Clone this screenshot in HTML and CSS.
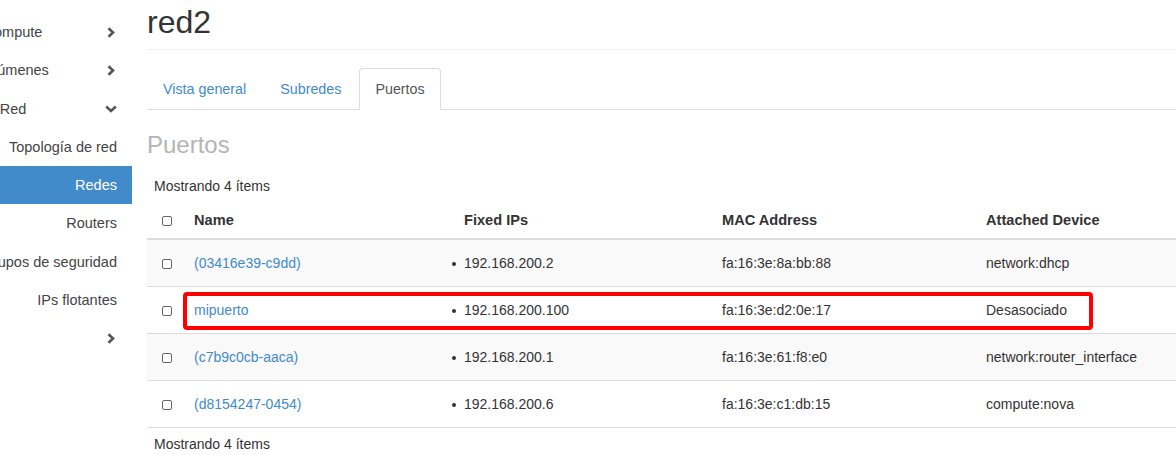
FILE: index.html
```html
<!DOCTYPE html>
<html lang="es">
<head>
<meta charset="utf-8">
<title>red2 - Puertos</title>
<link rel="stylesheet" href="styles.css">
</head>
<body>
<div class="page">
  <nav class="sidebar">
    <div class="group"><span class="label">Compute</span><span class="chev"><svg width="8" height="11" viewBox="0 0 8 11"><path d="M1.5 1.2 L6 5.5 L1.5 9.8" fill="none" stroke="#555" stroke-width="2.6"/></svg></span></div>
    <div class="group"><span class="label">Volúmenes</span><span class="chev"><svg width="8" height="11" viewBox="0 0 8 11"><path d="M1.5 1.2 L6 5.5 L1.5 9.8" fill="none" stroke="#555" stroke-width="2.6"/></svg></span></div>
    <div class="group"><span class="label">Red</span><span class="chev"><svg width="12" height="8" viewBox="0 0 12 8"><path d="M1.2 1.5 L6 6 L10.8 1.5" fill="none" stroke="#555" stroke-width="2.6"/></svg></span></div>
    <a class="sub"><span>Topología de red</span></a>
    <a class="sub active"><span>Redes</span></a>
    <a class="sub"><span>Routers</span></a>
    <a class="sub"><span>Grupos de seguridad</span></a>
    <a class="sub"><span>IPs flotantes</span></a>
    <div class="group"><span class="label"></span><span class="chev"><svg width="8" height="11" viewBox="0 0 8 11"><path d="M1.5 1.2 L6 5.5 L1.5 9.8" fill="none" stroke="#555" stroke-width="2.6"/></svg></span></div>
  </nav>

  <main class="main">
    <h1 class="page-title">red2</h1>
    <ul class="tabs">
      <li><a>Vista general</a></li>
      <li><a>Subredes</a></li>
      <li class="active"><a>Puertos</a></li>
    </ul>

    <h2 class="section-title">Puertos</h2>
    <div class="count">Mostrando 4 ítems</div>
    <table class="ports">
      <colgroup>
        <col class="c-check"><col class="c-name"><col class="c-ips"><col class="c-mac"><col class="c-dev">
      </colgroup>
      <thead>
        <tr>
          <th class="check"><input type="checkbox" class="cb"></th>
          <th>Name</th>
          <th>Fixed IPs</th>
          <th>MAC Address</th>
          <th>Attached Device</th>
        </tr>
      </thead>
      <tbody>
        <tr>
          <td class="check"><input type="checkbox" class="cb"></td>
          <td><a class="link">(03416e39-c9dd)</a></td>
          <td><ul class="ips"><li>192.168.200.2</li></ul></td>
          <td>fa:16:3e:8a:bb:88</td>
          <td>network:dhcp</td>
        </tr>
        <tr>
          <td class="check"><input type="checkbox" class="cb"></td>
          <td class="marked"><a class="link">mipuerto</a><span class="highlight"></span></td>
          <td><ul class="ips"><li>192.168.200.100</li></ul></td>
          <td>fa:16:3e:d2:0e:17</td>
          <td>Desasociado</td>
        </tr>
        <tr>
          <td class="check"><input type="checkbox" class="cb"></td>
          <td><a class="link">(c7b9c0cb-aaca)</a></td>
          <td><ul class="ips"><li>192.168.200.1</li></ul></td>
          <td>fa:16:3e:61:f8:e0</td>
          <td>network:router_interface</td>
        </tr>
        <tr>
          <td class="check"><input type="checkbox" class="cb"></td>
          <td><a class="link">(d8154247-0454)</a></td>
          <td><ul class="ips"><li>192.168.200.6</li></ul></td>
          <td>fa:16:3e:c1:db:15</td>
          <td>compute:nova</td>
        </tr>
      </tbody>
    </table>
    <div class="count foot">Mostrando 4 ítems</div>
  </main>
</div>
</body>
</html>
```

FILE: styles.css
```css
html, body {
  margin: 0;
  padding: 0;
  background: #fff;
  overflow: hidden;
}
body {
  font-family: "Liberation Sans", Arial, sans-serif;
  font-size: 14px;
  line-height: 20px;
  color: #333;
  width: 1176px;
  height: 455px;
}
.page {
  display: flex;
  align-items: flex-start;
}

/* Sidebar */
.sidebar {
  width: 132px;
  flex-shrink: 0;
  display: flex;
  flex-direction: column;
  padding-top: 13px;
  overflow: hidden;
  color: #444;
  font-size: 14.5px;
}
.group {
  display: flex;
  align-items: center;
  height: 38.25px;
  padding-right: 15px;
}
.group .label {
  flex-shrink: 0;
  width: 146px;
  margin-left: -60px;
  text-align: center;
  white-space: nowrap;
}
.group .chev {
  margin-left: auto;
  width: 12px;
  display: flex;
  justify-content: center;
  align-items: center;
}
.group .chev svg { display: block; }
.sub {
  display: flex;
  justify-content: flex-end;
  align-items: center;
  height: 38.25px;
  padding-right: 15px;
  color: #444;
}
.sub span {
  flex-shrink: 0;
  white-space: nowrap;
}
.sub.active {
  background: #428bca;
  color: #fff;
}

/* Main */
.main {
  flex-shrink: 0;
  width: 1131px;
  margin-left: 15px;
}
.page-title {
  margin: 6px 0 0;
  padding-bottom: 10px;
  font-size: 32px;
  line-height: 33px;
  font-weight: normal;
  color: #333;
  border-bottom: 1px solid #eee;
}
.tabs {
  list-style: none;
  margin: 18px 0 0;
  padding: 0;
  display: flex;
  border-bottom: 1px solid #ddd;
  font-size: 14.3px;
}
.tabs li {
  margin-right: 2px;
  margin-bottom: -1px;
}
.tabs a {
  display: block;
  padding: 10px 15px;
  border: 1px solid transparent;
  border-radius: 4px 4px 0 0;
  color: #428bca;
}
.tabs li.active a {
  color: #555;
  background: #fff;
  border-color: #ddd #ddd transparent;
}
.section-title {
  margin: 22px 0 0;
  font-size: 24px;
  line-height: 26px;
  font-weight: normal;
  color: #b5b5b5;
}
.count {
  margin-top: 18px;
  padding-left: 7px;
  color: #333;
}
.count.foot {
  margin-top: 6px;
}

/* Table */
.ports {
  margin-top: 6px;
  border-collapse: collapse;
  table-layout: fixed;
  width: 1131px;
}
.c-check { width: 39px; }
.c-name { width: 270px; }
.c-ips { width: 258px; }
.c-mac { width: 264px; }
.c-dev { width: 300px; }
.ports th {
  text-align: left;
  font-weight: bold;
  font-size: 14.6px;
  padding: 8px;
  border-bottom: 2px solid #ddd;
  white-space: nowrap;
}
.ports td {
  padding: 13px 8px;
  border-bottom: 1px solid #ddd;
  white-space: nowrap;
  vertical-align: middle;
}
.ports tbody tr:nth-child(odd) td {
  background: #f9f9f9;
}
.ports .check {
  text-align: center;
  padding-left: 0;
  padding-right: 0;
}
.cb {
  appearance: none;
  -webkit-appearance: none;
  display: inline-block;
  width: 10px;
  height: 10px;
  margin: 0;
  border: 1.5px solid #666;
  border-radius: 2px;
  background: #fff;
  vertical-align: -1px;
  box-sizing: border-box;
}
.link {
  color: #428bca;
}
.ips {
  margin: 0;
  padding: 0;
  list-style: none;
}
.ips li::before {
  content: "";
  display: inline-block;
  width: 4px;
  height: 4px;
  border-radius: 50%;
  background: #333;
  margin-left: -12px;
  margin-right: 8px;
  vertical-align: middle;
}
.marked {
  position: relative;
}
.highlight {
  position: absolute;
  left: -3px;
  top: 5px;
  width: 910px;
  height: 38px;
  box-sizing: border-box;
  border: 4px solid #ff0000;
  border-radius: 4px;
  pointer-events: none;
}
```
